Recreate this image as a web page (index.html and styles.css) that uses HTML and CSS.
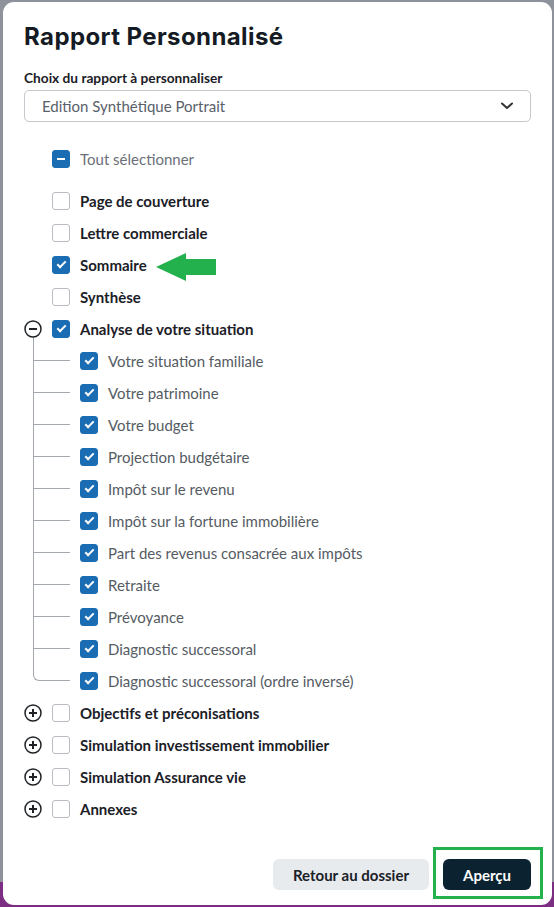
FILE: index.html
```html
<!DOCTYPE html>
<html lang="fr">
<head>
  <meta charset="UTF-8">
  <meta name="viewport" content="width=device-width, initial-scale=1.0">
  <title>Rapport Personnalisé</title>
  <link rel="stylesheet" href="styles.css">
</head>
<body>

  <div class="modal">
    <h1 class="modal-title">Rapport Personnalisé</h1>

    <!-- Choix du modèle -->
    <label class="field-label" for="reportSelect">Choix du rapport à personnaliser</label>
    <div class="select" id="reportSelect">
      <span>Edition Synthétique Portrait</span>
      <svg class="chevron" width="14" height="8" viewBox="0 0 14 8"><path d="M2 1.5 L7 6 L12 1.5" fill="none" stroke="#333" stroke-width="2" stroke-linecap="round" stroke-linejoin="round"/></svg>
    </div>

    <!-- Arbre des sections -->
    <ul class="tree">
      <li class="row row-all"><span class="slot"></span><span class="box partial"></span><span class="label muted">Tout sélectionner</span></li>

      <li class="row"><span class="slot"></span><span class="box"></span><span class="label strong">Page de couverture</span></li>
      <li class="row"><span class="slot"></span><span class="box"></span><span class="label strong">Lettre commerciale</span></li>
      <li class="row">
        <span class="slot"></span><span class="box checked"></span><span class="label strong">Sommaire</span>
        <svg class="arrow" width="62" height="30" viewBox="0 0 62 30"><path d="M1 14 L31 0 L31 6 L61 6 L61 22 L31 22 L31 28 Z" fill="#22b14c"/></svg>
      </li>
      <li class="row"><span class="slot"></span><span class="box"></span><span class="label strong">Synthèse</span></li>

      <li class="group">
        <div class="row">
          <span class="slot"><svg class="toggle" width="18" height="18" viewBox="0 0 18 18"><circle cx="9" cy="9" r="8" fill="#fff" stroke="#1f2328" stroke-width="1.5"/><path d="M5 9 H13" stroke="#1f2328" stroke-width="2"/></svg></span>
          <span class="box checked"></span><span class="label strong">Analyse de votre situation</span>
        </div>
        <ul class="children">
          <li class="row"><span class="box checked"></span><span class="label">Votre situation familiale</span></li>
          <li class="row"><span class="box checked"></span><span class="label">Votre patrimoine</span></li>
          <li class="row"><span class="box checked"></span><span class="label">Votre budget</span></li>
          <li class="row"><span class="box checked"></span><span class="label">Projection budgétaire</span></li>
          <li class="row"><span class="box checked"></span><span class="label">Impôt sur le revenu</span></li>
          <li class="row"><span class="box checked"></span><span class="label">Impôt sur la fortune immobilière</span></li>
          <li class="row"><span class="box checked"></span><span class="label">Part des revenus consacrée aux impôts</span></li>
          <li class="row"><span class="box checked"></span><span class="label">Retraite</span></li>
          <li class="row"><span class="box checked"></span><span class="label">Prévoyance</span></li>
          <li class="row"><span class="box checked"></span><span class="label">Diagnostic successoral</span></li>
          <li class="row"><span class="box checked"></span><span class="label">Diagnostic successoral (ordre inversé)</span></li>
        </ul>
      </li>

      <li class="row">
        <span class="slot"><svg class="toggle" width="18" height="18" viewBox="0 0 18 18"><circle cx="9" cy="9" r="8" fill="#fff" stroke="#1f2328" stroke-width="1.5"/><path d="M5 9 H13 M9 5 V13" stroke="#1f2328" stroke-width="2"/></svg></span>
        <span class="box"></span><span class="label strong">Objectifs et préconisations</span>
      </li>
      <li class="row">
        <span class="slot"><svg class="toggle" width="18" height="18" viewBox="0 0 18 18"><circle cx="9" cy="9" r="8" fill="#fff" stroke="#1f2328" stroke-width="1.5"/><path d="M5 9 H13 M9 5 V13" stroke="#1f2328" stroke-width="2"/></svg></span>
        <span class="box"></span><span class="label strong">Simulation investissement immobilier</span>
      </li>
      <li class="row">
        <span class="slot"><svg class="toggle" width="18" height="18" viewBox="0 0 18 18"><circle cx="9" cy="9" r="8" fill="#fff" stroke="#1f2328" stroke-width="1.5"/><path d="M5 9 H13 M9 5 V13" stroke="#1f2328" stroke-width="2"/></svg></span>
        <span class="box"></span><span class="label strong">Simulation Assurance vie</span>
      </li>
      <li class="row">
        <span class="slot"><svg class="toggle" width="18" height="18" viewBox="0 0 18 18"><circle cx="9" cy="9" r="8" fill="#fff" stroke="#1f2328" stroke-width="1.5"/><path d="M5 9 H13 M9 5 V13" stroke="#1f2328" stroke-width="2"/></svg></span>
        <span class="box"></span><span class="label strong">Annexes</span>
      </li>
    </ul>

    <!-- Actions -->
    <div class="actions">
      <button class="btn btn-light">Retour au dossier</button>
      <button class="btn btn-dark highlighted">Aperçu</button>
    </div>
  </div>

</body>
</html>
```

FILE: styles.css
```css
body {
  margin: 0;
  padding: 2px 2px 2px 3px;
  font-family: Lato, "Noto Sans", sans-serif;
  background: linear-gradient(to bottom, #8d929b 0, #8d929b 882px, #7c2f82 882px);
}

.modal {
  background-color: white;
  border-radius: 11px;
  padding: 20px 21px 15px 21px;
}

.modal-title {
  font-family: Inter, Lato, sans-serif;
  font-size: 24px;
  font-weight: 700;
  line-height: 30px;
  letter-spacing: 0.4px;
  color: #151b24;
  margin: 0 0 17px 0;
}

.field-label {
  display: block;
  font-size: 13.7px;
  font-weight: 700;
  line-height: 18px;
  color: #1b2027;
  margin-bottom: 3px;
}

.select {
  height: 30px;
  border: 1px solid #c5c8cc;
  border-radius: 5px;
  display: flex;
  align-items: center;
  justify-content: space-between;
  padding: 0 16px 0 17px;
  font-size: 15px;
  color: #596069;
}

.tree {
  list-style: none;
  margin: 21px 0 0 0;
  padding: 0;
}

.tree ul {
  list-style: none;
  margin: 0;
  padding: 0;
}

.row {
  display: flex;
  align-items: center;
  gap: 10px;
  height: 32px;
}

.row-all {
  margin-bottom: 10px;
}

.slot {
  width: 18px;
  height: 18px;
  display: flex;
}

.toggle {
  position: relative;
  z-index: 1;
}

.box {
  width: 18px;
  height: 18px;
  box-sizing: border-box;
  border: 1px solid #b9bdc3;
  border-radius: 3px;
  position: relative;
  flex-shrink: 0;
}

.box.checked,
.box.partial {
  background-color: #1a6db3;
  border-color: #1a6db3;
}

.box.checked::after {
  content: "";
  position: absolute;
  left: 4px;
  top: 4px;
  width: 7px;
  height: 3px;
  border-left: 2px solid white;
  border-bottom: 2px solid white;
  transform: rotate(-45deg);
}

.box.partial::after {
  content: "";
  position: absolute;
  left: 4px;
  top: 7px;
  width: 8px;
  height: 2px;
  background-color: white;
}

.label {
  font-size: 15px;
  color: #555b63;
  white-space: nowrap;
}

.label.strong {
  font-weight: 700;
  color: #1b2027;
}

.label.muted {
  color: #6b7078;
}

.arrow {
  margin-left: -2px;
  margin-top: 6px;
}

.children {
  padding-left: 56px !important;
}

.children li {
  position: relative;
}

.children li::before {
  content: "";
  position: absolute;
  left: -47px;
  top: -16px;
  width: 37px;
  height: 32px;
  box-sizing: border-box;
  border-left: 1px solid #a3a8ae;
  border-bottom: 1px solid #a3a8ae;
}

.children li:last-child::before {
  border-bottom-left-radius: 6px;
}

.actions {
  display: flex;
  justify-content: flex-end;
  gap: 14px;
  margin-top: 34px;
}

.btn {
  height: 31px;
  padding: 0 20px;
  border: none;
  border-radius: 6px;
  font-family: Lato, "Noto Sans", sans-serif;
  font-size: 15px;
  font-weight: 700;
  cursor: pointer;
}

.btn-light {
  background-color: #e8ebee;
  color: #1b2027;
}

.btn-dark {
  background-color: #0b2231;
  color: white;
}

/* cadre vert d'annotation */
.highlighted {
  position: relative;
}

.highlighted::after {
  content: "";
  position: absolute;
  top: -12px;
  bottom: -9px;
  left: -10px;
  right: -12px;
  border: 3px solid #22b14c;
}
```
